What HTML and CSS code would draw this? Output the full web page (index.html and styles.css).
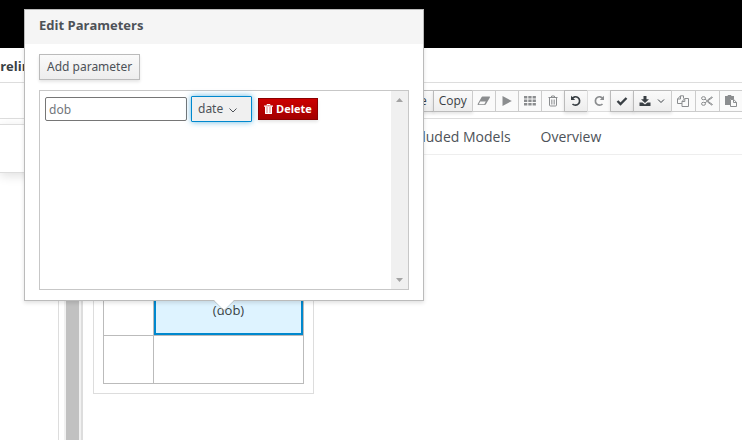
FILE: index.html
```html
<!DOCTYPE html>
<html lang="en">
<head>
<meta charset="utf-8">
<title>Edit Parameters</title>
<link rel="stylesheet" href="styles.css">
</head>
<body>
<header class="masthead"></header>
<nav class="breadcrumb"><a href="#" class="crumb">Prelim</a></nav>
<div class="toolbar">
  <button class="tool tool-text" type="button">e</button>
  <button class="tool tool-text" type="button">Copy</button>
  <button class="tool off" type="button" aria-label="Erase"><svg width="14" height="12" viewBox="0 0 14 12"><path fill="currentColor" fill-rule="evenodd" d="M5.500 1.500H12.500q.8 0 .4 1L8.900 9.200q-.4.8-1.200.8H1.200Q.2 10 .7 9L4.500 2.200Q4.900 1.500 5.500 1.500ZM3.200 6.500 1.800 9.200H7.300L8.800 6.500Z"/></svg></button>
  <button class="tool off" type="button" aria-label="Run"><svg width="10" height="12" viewBox="0 0 10 12"><path fill="currentColor" d="M.5 1 9.800 6 .5 11Z"/></svg></button>
  <button class="tool off" type="button" aria-label="Grid"><svg width="12" height="10" viewBox="0 0 12 10"><path fill="currentColor" d="M0 0h3.300v2.600H0zM4.300 0h3.300v2.600H4.300zM8.600 0h3.300v2.600H8.600zM0 3.500h3.300v2.600H0zM4.300 3.500h3.300v2.600H4.300zM8.600 3.500h3.300v2.600H8.600zM0 7h3.300v2.600H0zM4.300 7h3.300v2.600H4.300zM8.600 7h3.300v2.600H8.600z"/></svg></button>
  <button class="tool off" type="button" aria-label="Remove"><svg width="10" height="12" viewBox="0 0 10 12"><path fill="none" stroke="currentColor" d="M.5 2.500h9M3.200 2.500 3.700 1h2.600l.5 1.500M1.500 2.500V10q0 1 1 1h5q1 0 1-1V2.500"/><path fill="none" stroke="currentColor" stroke-width=".7" d="M3.500 4.500v5M5 4.500v5M6.500 4.500v5"/></svg></button>
  <button class="tool" type="button" aria-label="Undo"><svg width="12" height="12" viewBox="0 0 12 12"><path fill="none" stroke="currentColor" stroke-width="1.700" d="M2 3.500A4.200 4.200 0 1 1 2.500 9"/><path fill="currentColor" d="M1 .8V5h4.200Z"/></svg></button>
  <button class="tool off light" type="button" aria-label="Redo"><svg width="12" height="12" viewBox="0 0 12 12"><path fill="none" stroke="currentColor" stroke-width="1.700" d="M10 3.500A4.200 4.200 0 1 0 9.500 9"/><path fill="currentColor" d="M11 .8V5H6.800Z"/></svg></button>
  <button class="tool" type="button" aria-label="Validate"><svg width="12" height="12" viewBox="0 0 12 12"><path fill="none" stroke="currentColor" stroke-width="2.400" d="M1.500 6 4.500 9 10.500 3"/></svg></button>
  <button class="tool tool-menu" type="button" aria-label="Download"><svg width="12" height="12" viewBox="0 0 12 12"><path fill="currentColor" d="M4.500 1h3v3.300h2.500L6 8 2 4.300h2.500ZM.5 7.500h3L6 9.500 8.500 7.500h3V11H.5Z"/></svg><svg width="8" height="8" viewBox="0 0 8 8"><path fill="none" stroke="currentColor" d="M1 2.500 4 5.500 7 2.500"/></svg></button>
  <button class="tool off clip" type="button" aria-label="Copy cells"><svg width="12" height="12" viewBox="0 0 12 12"><path fill="none" stroke="currentColor" d="M5 8.500H.5V4L3.500 .8H6.500V3.500M3.500.8V4H.5M5 6.500 7.800 3.500h3.700v8H5ZM7.800 3.500v3H5"/></svg></button>
  <button class="tool off clip" type="button" aria-label="Cut"><svg width="12" height="12" viewBox="0 0 12 12"><g fill="none" stroke="currentColor"><ellipse cx="2.500" cy="3.200" rx="2" ry="1.500"/><ellipse cx="2.500" cy="8.800" rx="2" ry="1.500"/><path d="M4 4.200 11.500 9.500M4 7.800 11.500 2.500M6.500 5 11 1.800 11.700 2.500M6.500 7 11 10.200 11.700 9.500"/></g></svg></button>
  <button class="tool off clip" type="button" aria-label="Paste"><svg width="12" height="12" viewBox="0 0 12 12"><path fill="currentColor" d="M0 1h2.500L3 0h3l.5 1H9v3H5v6H0Z"/><path fill="none" stroke="currentColor" d="M5.500 4.500h3.200l2.800 2.800v4.200h-6ZM8.500 4.500v3h3"/></svg></button>
</div>
<div class="workspace">
  <aside class="sidebar"><div class="side-card"></div><div class="side-body"></div></aside>
  <div class="scroller"></div>
  <main class="main">
    <nav class="tabs"><a href="#">Included Models</a><a href="#">Overview</a></nav>
    <div class="canvas">
      <table class="grid" aria-label="Decision table">
        <tr><td></td><td class="selected">(dob)</td></tr>
        <tr><td></td><td></td></tr>
      </table>
    </div>
  </main>
</div>
<section class="popover" role="dialog" aria-labelledby="popover-title">
  <h3 class="popover-title" id="popover-title">Edit Parameters</h3>
  <div class="popover-body">
    <button class="add" type="button">Add parameter</button>
    <div class="list">
      <div class="row">
        <input class="name" type="text" value="dob" aria-label="Parameter name">
        <div class="type">
          <select aria-label="Parameter type"><option>date</option></select>
          <svg class="chevron" width="8" height="8" viewBox="0 0 8 8"><path fill="none" stroke="currentColor" d="M.5 2.500 4 6 7.500 2.500"/></svg>
        </div>
        <button class="delete" type="button"><svg width="9" height="10" viewBox="0 0 9 10"><path fill="none" stroke="currentColor" d="M3 1.500V.5h3v1"/><path fill="currentColor" d="M0 1.500h9v1.200H0z"/><path fill="currentColor" fill-opacity=".75" d="M1 2.500h7V10H1z"/><path fill="none" stroke="currentColor" d="M1.500 2.500v7h6v-7M4.500 3v6"/></svg>Delete</button>
      </div>
      <div class="track">
        <svg width="7" height="4" viewBox="0 0 7 4"><path fill="#a3a3a3" d="M0 4 3.500 0 7 4Z"/></svg>
        <svg width="7" height="4" viewBox="0 0 7 4"><path fill="#a3a3a3" d="M0 0 3.500 4 7 0Z"/></svg>
      </div>
    </div>
  </div>
  <svg class="pointer" width="20" height="11" viewBox="0 0 20 11"><path fill="#fff" d="M0 0H20L10 10Z"/><path fill="none" stroke="#bbb" stroke-opacity=".6" d="M0 1 10 10.500 20 1"/></svg>
</section>
</body>
</html>
```
FILE: styles.css
```css
* { box-sizing: border-box; }
body {
  margin: 0;
  min-height: 100vh;
  display: flex;
  flex-direction: column;
  overflow: hidden;
  background: #fff;
  color: #4d5258;
  font: 12px/20px "Open Sans", "Noto Sans", sans-serif;
}
button, input, select { font: inherit; color: inherit; margin: 0; }
a { color: inherit; text-decoration: none; }
svg { display: block; flex: none; }

.masthead { height: 48px; background: #000; }
.breadcrumb {
  height: 35px;
  padding-top: 8px;
  border-bottom: 1px solid #ddd;
}
.crumb { margin-left: -8px; font-size: 13px; font-weight: 700; color: #393f44; }

.toolbar {
  display: flex;
  align-items: flex-start;
  height: 36px;
  padding: 7px 0 0 413px;
  border-bottom: 1px solid #ddd;
  overflow: hidden;
}
.tool {
  flex: none;
  display: flex;
  align-items: center;
  justify-content: center;
  width: 24px;
  height: 22px;
  margin-right: -1px;
  padding: 0;
  border: 1px solid #bbb;
  background: linear-gradient(#fafafa, #ededed);
  box-shadow: 0 2px 3px rgba(3, 3, 3, .1);
  color: #393f44;
}
.tool-text { width: auto; padding: 0 6px; }
.tool-text + .tool-text { padding: 0 5px; }
.tool.off { background: #fafafa; color: #8b8d8f; box-shadow: none; border-color: #ccc; }
.tool.light { border-color: #ddd; }
.tool.clip { width: 25px; }
.tool-menu { width: 39px; gap: 6px; }

.workspace { flex: 1; display: flex; }
.sidebar { flex: none; width: 64px; display: flex; flex-direction: column; padding-top: 5px; }
.side-card {
  height: 49px;
  border: solid #ddd;
  border-width: 1px 0;
  box-shadow: 0 3px 10px rgba(3, 3, 3, .12);
}
.side-body { flex: 1; width: 59px; border-right: 1px solid #ddd; }
.scroller {
  flex: none;
  width: 17px;
  background: #c1c1c1;
  border: solid #f1f1f1;
  border-width: 0 2px;
}
.main { flex: 1; min-width: 0; border-left: 2px solid #ddd; }
.tabs {
  display: flex;
  gap: 30px;
  height: 36px;
  padding: 8px 0 0 320px;
  border-bottom: 1px solid #eee;
  font-size: 14px;
}
.canvas {
  width: 221px;
  margin: 120px 0 0 10px;
  padding: 11px 9px 9px;
  border: 1px solid #ddd;
}
.grid { border-collapse: collapse; table-layout: fixed; width: 201px; }
.grid td { height: 48px; padding: 0 0 4px; border: 1px solid #bbb; text-align: center; font-size: 13px; color: #393f44; }
.grid td:first-child { width: 50px; }
.grid .selected { background: #def3ff; box-shadow: inset 0 0 0 2px #0088ce; }

.popover {
  position: absolute;
  top: 9px;
  left: 24px;
  width: 400px;
  border: 1px solid #bbb;
  background: #fff;
  box-shadow: 0 2px 4px rgba(3, 3, 3, .12);
}
.popover-title {
  margin: 0;
  height: 34px;
  padding: 5px 14px;
  background: #f5f5f5;
  font-size: 13px;
  font-weight: 700;
}
.popover-body { padding: 10px 14px; }
.add {
  display: block;
  height: 26px;
  padding: 0 7px;
  border: 1px solid #bbb;
  background: linear-gradient(#fafafa, #ededed);
  box-shadow: 0 2px 3px rgba(3, 3, 3, .1);
  font-family: "Noto Sans", sans-serif;
}
.list { display: flex; height: 200px; margin-top: 10px; border: 1px solid #c7c7c7; }
.row { flex: 1; display: flex; align-items: center; height: 36px; padding-left: 5px; }
.name { width: 142px; height: 24px; padding: 0 3px; border: 1px solid #767676; border-radius: 2px; font-family: "Noto Sans", sans-serif; background: #fff; color: #72767b; }
.type { position: relative; margin: 0 6px 0 4px; }
.type select {
  display: block;
  appearance: none;
  width: 61px;
  height: 26px;
  padding: 0 6px;
  border: 1px solid #0088ce;
  border-radius: 1px;
  background: #f0f0f0;
  box-shadow: 0 0 6px rgba(0, 136, 206, .6);
  font-family: "Noto Sans", sans-serif;
}
.chevron { position: absolute; right: 15px; top: 10px; pointer-events: none; }
.delete {
  display: flex;
  align-items: center;
  gap: 3px;
  height: 22px;
  padding: 0 5px;
  border: 1px solid #8b0000;
  background: linear-gradient(#c00, #a30000);
  box-shadow: 0 2px 3px rgba(3, 3, 3, .1);
  color: #fff;
  font-size: 11px;
  font-weight: 700;
}
.track {
  width: 17px;
  padding: 7px 5px;
  display: flex;
  flex-direction: column;
  justify-content: space-between;
  background: #f0f0f0;
}
.pointer { position: absolute; top: 100%; left: 189px; }
```
